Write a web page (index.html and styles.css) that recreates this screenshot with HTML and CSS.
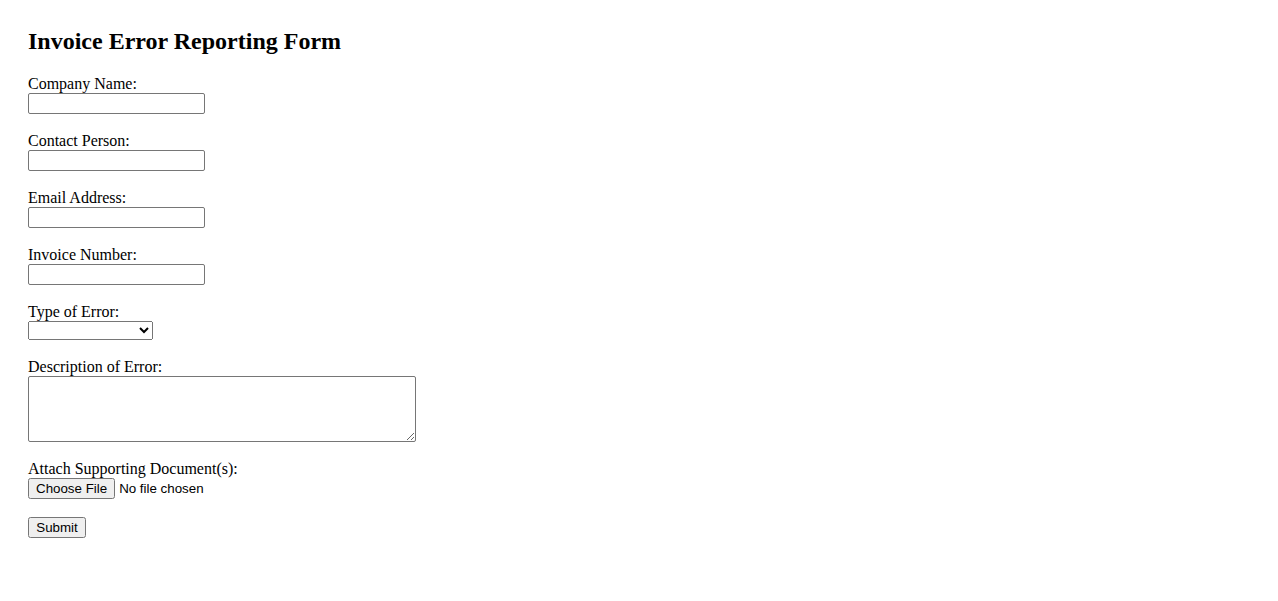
FILE: index.html
```html
<!DOCTYPE html>
<html>
<head>
<meta charset="utf-8">
<title>Invoice Error Reporting Form</title>
<link rel="stylesheet" href="styles.css">
</head>
<body>
<h2 class="title">Invoice Error Reporting Form</h2>
<form class="form">
<label for="company">Company Name:</label><br>
<input class="field" type="text" id="company"><br><br>
<label for="contact">Contact Person:</label><br>
<input class="field" type="text" id="contact"><br><br>
<label for="email">Email Address:</label><br>
<input class="field" type="email" id="email"><br><br>
<label for="invoice">Invoice Number:</label><br>
<input class="field" type="text" id="invoice"><br><br>
<label for="etype">Type of Error:</label><br>
<select class="choice" id="etype">
<option value=""></option>
<option>Incorrect Amount</option>
<option>Wrong Item</option>
<option>Duplicate Charge</option>
</select><br><br>
<label for="desc">Description of Error:</label><br>
<textarea class="area" id="desc"></textarea><br><br>
<label for="file">Attach Supporting Document(s):</label><br>
<input class="file" type="file" id="file"><br><br>
<input class="btn" type="submit" value="Submit">
</form>
</body>
</html>
```
FILE: styles.css
```css
body {
  margin: 8px;
  padding: 20px;
  font-family: "Liberation Serif", "Times New Roman", serif;
  font-size: 16px;
  color: #000;
  background: #fff;
}
.title {
  font-size: 24px;
  font-weight: bold;
  margin: 0 0 20px 0;
}
.field {
  width: 177px;
  height: 21px;
  box-sizing: border-box;
  border: 1px solid #767676;
  border-radius: 2px;
  font-family: "Liberation Sans", Arial, sans-serif;
  font-size: 13.33px;
}
.choice {
  width: 125px;
  height: 19px;
  box-sizing: border-box;
  font-family: "Liberation Sans", Arial, sans-serif;
  font-size: 13.33px;
}
.area {
  width: 388px;
  height: 66px;
  box-sizing: border-box;
  border: 1px solid #767676;
  border-radius: 2px;
  vertical-align: bottom;
}
.file, .btn {
  font-family: "Liberation Sans", Arial, sans-serif;
  font-size: 13.33px;
}
.btn {
  width: 58px;
}
```
